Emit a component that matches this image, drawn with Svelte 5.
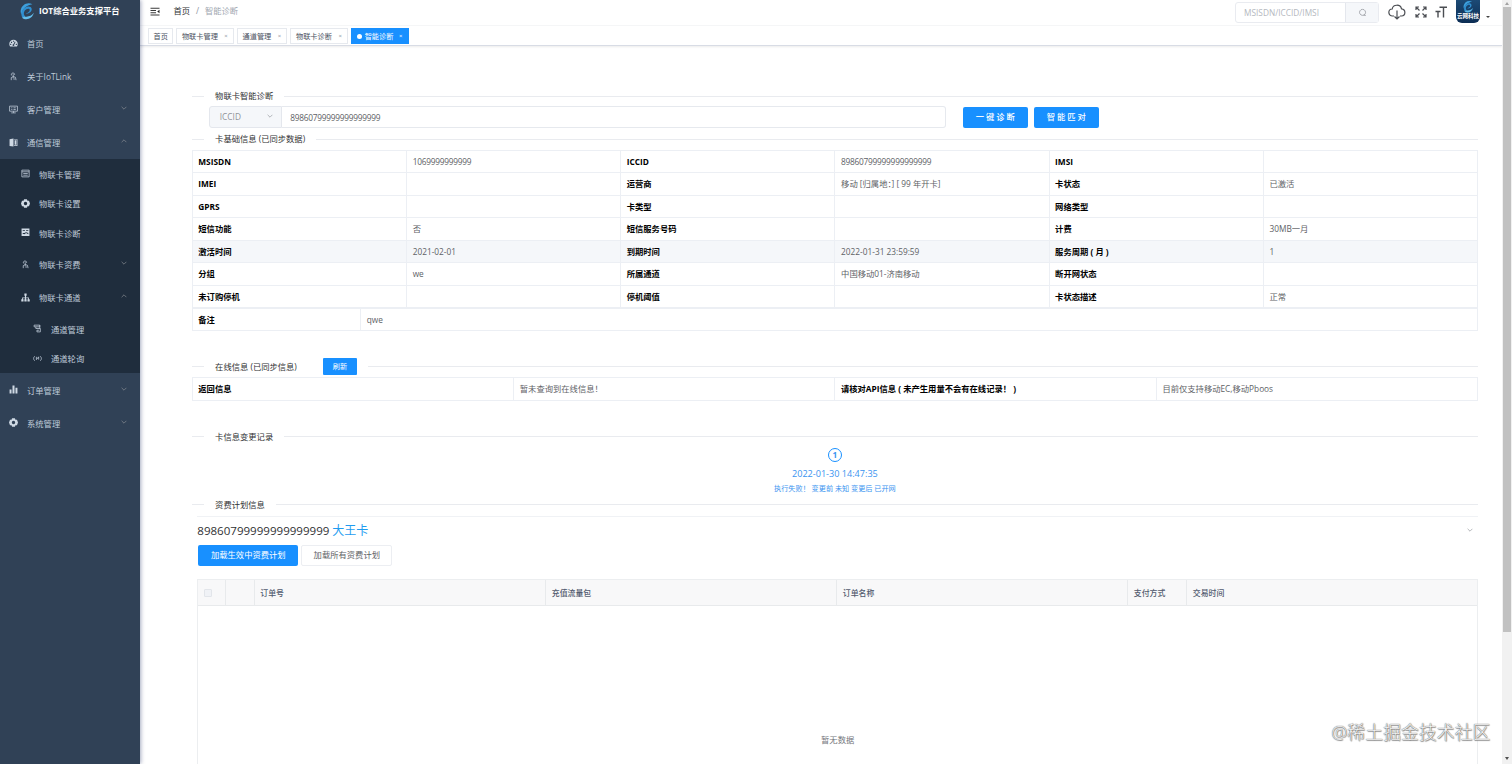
<script lang="ts">
  type Icon = { d: string; line?: boolean };
  type MenuItem = {
    label: string;
    icon: string;
    level: number;
    arrow?: 'up' | 'down';
    compact?: boolean;
  };

  const icons: Record<string, Icon> = {
    dashboard: {
      d: 'M8 1.500a7.500 7.500 0 0 0-7.500 7.500c0 1.600.5 3 1.300 4.200h12.400a7.500 7.500 0 0 0 1.300-4.200A7.500 7.500 0 0 0 8 1.500zM7 3h2v2H7zM2 8.500h2v2H2zM3.500 5h2v2h-2zM12 8.500h2v2h-2zM10.300 4.500l1.400.8-2.500 4.700a1.600 1.600 0 1 1-1.400-.8z',
    },
    people: {
      d: 'M4.500 6C2.500 1 10.500 0 10 5M7.500 4v7M7.500 8L4 10v4.500M7.500 8l4 1.500 1 5M9 11v3',
      line: true,
    },
    monitor: { d: 'M1 2h14v9H1zM4 14h8M8 11v3M4 5h2M4 8h2M8 5h4M8 8h4', line: true },
    book: { d: 'M1 2l7-1v14l-7-1zM9 2h6v12H9v-1.200h4.800V3.200H9zM10 4h3v8h-3z' },
    list: { d: 'M1.500 2h13v12h-13zM1.500 5h13M4 8h8M4 11h8', line: true },
    gear: {
      d: 'M5.500.5h5l1 2.500 2.700.3L16 8l-1.800 4.700-2.700.3-1 2.500h-5l-1-2.500-2.700-.3L0 8l1.800-4.700L4.500 3zM8 5a3 3 0 1 0 0 6 3 3 0 0 0 0-6z',
    },
    chart: { d: 'M1 1h14v13H1zM3 4v1.500h4V4zM9 4v1.500h4V4zM3 9v1l3 1 3-2 4 2V9L9 7.500 6 9z' },
    tree: { d: 'M6 1h4v4H9v3h5v3h1.500v4h-4v-4h1V9.500H9V11h1v4H6v-4h1V9.500H3.500V11h1v4h-4v-4H2V8h5V5H6z' },
    channel: { d: 'M2 2h10v3H2zM5 5v3h8v6H7v-3h4M12 2v6', line: true },
    signal: { d: 'M3 4c-2.500 2-2.500 6 0 8M13 4c2.500 2 2.500 6 0 8M6 5v5M10 5v5M6 10l4-5', line: true },
    bars: { d: 'M1 8h3.500v7H1zM6.200 1h3.600v14H6.200zM11.500 5H15v10h-3.500z' },
  };

  const menu: MenuItem[] = [
    { label: '首页', icon: 'dashboard', level: 0 },
    { label: '关于IoTLink', icon: 'people', level: 0 },
    { label: '客户管理', icon: 'monitor', level: 0, arrow: 'down' },
    { label: '通信管理', icon: 'book', level: 0, arrow: 'up' },
    { label: '物联卡管理', icon: 'list', level: 1, compact: true },
    { label: '物联卡设置', icon: 'gear', level: 1, compact: true },
    { label: '物联卡诊断', icon: 'chart', level: 1, compact: true },
    { label: '物联卡资费', icon: 'people', level: 1, arrow: 'down' },
    { label: '物联卡通道', icon: 'tree', level: 1, arrow: 'up' },
    { label: '通道管理', icon: 'channel', level: 2, compact: true },
    { label: '通道轮询', icon: 'signal', level: 2, compact: true },
    { label: '订单管理', icon: 'bars', level: 0, arrow: 'down' },
    { label: '系统管理', icon: 'gear', level: 0, arrow: 'down' },
  ];

  const tags = ['首页', '物联卡管理', '通道管理', '物联卡诊断', '智能诊断'];
  let activeTag = $state('智能诊断');

  const cardRows = [
    ['MSISDN', '1069999999999', 'ICCID', '89860799999999999999', 'IMSI', ''],
    ['IMEI', '', '运营商', '移动 [归属地：] [ 99 年开卡]', '卡状态', '已激活'],
    ['GPRS', '', '卡类型', '', '网络类型', ''],
    ['短信功能', '否', '短信服务号码', '', '计费', '30MB一月'],
    ['激活时间', '2021-02-01', '到期时间', '2022-01-31 23:59:59', '服务周期 ( 月 )', '1'],
    ['分组', 'we', '所属通道', '中国移动01-济南移动', '断开网状态', ''],
    ['未订购停机', '', '停机阈值', '', '卡状态描述', '正常'],
  ];
  let hoverRow = $state(4);

  let keyword = $state('');
  let iccid = $state('89860799999999999999');
</script>

{#snippet icon(name: string)}
  <svg class="icon" class:line={icons[name].line} viewBox="0 0 16 16">
    <path d={icons[name].d} fill-rule="evenodd" />
  </svg>
{/snippet}

{#snippet chevron(dir: string)}
  <svg class="chevron" class:up={dir === 'up'} viewBox="0 0 10 10">
    <path d="M1 3l4 4 4-4" />
  </svg>
{/snippet}

{#snippet swirl()}
  <path fill="#3d9fdc" d="M15.500 2.500C10-.5 3.500 3 2.500 9c-.3 2 0 3.500.8 5C4 8 8.500 3.500 15.500 2.500z" />
  <path fill="#2f8fd0" d="M4.200 17.500C1.500 12 5 5.500 10.500 5c4.500-.3 5.500 4 2.500 6.500-1.500 1.200-3.500 1.700-5 1.300 2.500-.6 4.700-2.300 4.500-4.200-.3-2-4-1.500-5.700 1.200-1.500 2.500-1 5 .7 6.200z" />
  <path fill="#63bdec" d="M4 17.500c4 3.500 11.500 1.500 13-5.500-2.500 3.500-6.500 5-10.500 4z" />
{/snippet}

<div class="app">
  <aside class="sidebar">
    <div class="logo">
      <svg viewBox="0 0 20 20">{@render swirl()}</svg>
      <h1>IOT综合业务支撑平台</h1>
    </div>
    <nav>
      {#each menu as item}
        <div class="menu-item level-{item.level}" class:compact={item.compact}>
          {@render icon(item.icon)}
          <span>{item.label}</span>
          {#if item.arrow}{@render chevron(item.arrow)}{/if}
        </div>
      {/each}
    </nav>
  </aside>

  <div class="main">
    <header class="navbar">
      <svg class="hamburger" viewBox="0 0 20 16">
        <path d="M1 1.500h18M1 6h11M1 10.500h11M1 15h18" />
        <path class="solid" d="M19 4.500v7L14.500 8z" />
      </svg>
      <div class="breadcrumb"><b>首页</b><i>/</i><span>智能诊断</span></div>
      <div class="search">
        <input bind:value={keyword} placeholder="MSISDN/ICCID/IMSI" />
        <button aria-label="搜索">
          <svg viewBox="0 0 12 12"><path d="M6 1.800a4 4 0 1 0 .1 0M7.500 9.800h3" /></svg>
        </button>
      </div>
      <svg class="nav-icon cloud" viewBox="0 0 18 16">
        <path d="M6 12H4.500a3.500 3.500 0 0 1-.3-7C5 0 12.500 0 13.500 4.800c4.500.5 4.500 7 0 7.200H12M9 6.500V15M6.500 12.500L9 15l2.500-2.500" />
      </svg>
      <svg class="nav-icon full" viewBox="0 0 12 12">
        <path d="M1 4V1h3M8 1h3v3M11 8v3H8M4 11H1V8M1 1l3.500 3.500M11 1L7.500 4.500M11 11L7.500 7.500M1 11l3.500-3.500" />
      </svg>
      <svg class="nav-icon size" viewBox="0 0 12 12">
        <path d="M4.500 1.200H12M8.500 1v10.500M.5 5.500h5M3 5.500v6" />
      </svg>
      <div class="avatar">
        <svg viewBox="0 0 20 20">{@render swirl()}</svg>
        <span>云网科技</span>
      </div>
      <span class="caret"></span>
    </header>

    <div class="tags">
      {#each tags as tag, i}
        <button class="tag" class:active={tag === activeTag} onclick={() => (activeTag = tag)}>
          {#if tag === activeTag}<span class="dot"></span>{/if}
          {tag}
          {#if i > 0}<span class="close">×</span>{/if}
        </button>
      {/each}
    </div>

    <main>
      <div class="divider first"><span>物联卡智能诊断</span></div>
      <div class="form">
        <div class="select">ICCID {@render chevron('down')}</div>
        <input class="digits" bind:value={iccid} />
        <button class="primary">一键诊断</button>
        <button class="primary">智能匹对</button>
      </div>

      <div class="divider"><span>卡基础信息 (已同步数据)</span></div>
      <div class="info">
        {#each cardRows as row, i}
          <!-- svelte-ignore a11y_no_static_element_interactions -->
          <div class="row" class:hover={i === hoverRow} onmouseenter={() => (hoverRow = i)}>
            {#each row as cell, c}
              <div class="cell" class:th={c % 2 === 0} class:digits={/^\d{13,}$/.test(cell)}>{cell}</div>
            {/each}
          </div>
        {/each}
      </div>
      <div class="info remark">
        <div class="row">
          <div class="cell th">备注</div>
          <div class="cell">qwe</div>
        </div>
      </div>

      <div class="divider online">
        <span>在线信息 (已同步信息) <button class="primary mini">刷新</button></span>
      </div>
      <div class="info">
        <div class="row">
          <div class="cell th">返回信息</div>
          <div class="cell">暂未查询到在线信息！</div>
          <div class="cell th">请核对API信息 ( 未产生用量不会有在线记录！ )</div>
          <div class="cell">目前仅支持移动EC,移动Pboos</div>
        </div>
      </div>

      <div class="divider changes"><span>卡信息变更记录</span></div>
      <div class="step">
        <div class="step-icon">1</div>
        <div class="step-title">2022-01-30 14:47:35</div>
        <div class="step-desc">执行失败！ 变更前 未知 变更后 已开网</div>
      </div>

      <div class="divider"><span>资费计划信息</span></div>
      <section class="plan">
        <div class="plan-title">
          <span>89860799999999999999</span>
          <em>大王卡</em>
          {@render chevron('down')}
        </div>
        <div class="plan-actions">
          <button class="primary">加载生效中资费计划</button>
          <button class="plain">加载所有资费计划</button>
        </div>
        <div class="orders">
          <div class="orders-head">
            <div><span class="checkbox"></span></div>
            <div></div>
            <div>订单号</div>
            <div>充值流量包</div>
            <div>订单名称</div>
            <div>支付方式</div>
            <div>交易时间</div>
          </div>
          <div class="empty">暂无数据</div>
        </div>
      </section>
    </main>
  </div>

  <div class="scrollbar">
    <span class="arrow up"></span>
    <span class="thumb"></span>
    <span class="arrow"></span>
  </div>
  <div class="watermark">@稀土掘金技术社区</div>
</div>

<style>
  :global(body) {
    margin: 0;
    overflow: hidden;
  }

  .app {
    position: relative;
    display: flex;
    width: 1512px;
    height: 764px;
    overflow: hidden;
    background: #fff;
    color: #606266;
    font-family: 'Open Sans', 'Noto Sans CJK SC', sans-serif;
    font-size: 8.3px;
    line-height: 12px;
  }

  .app * {
    box-sizing: border-box;
  }

  button,
  input {
    font: inherit;
    margin: 0;
    padding: 0;
    outline: none;
  }

  .sidebar {
    z-index: 1;
    flex: none;
    width: 139.5px;
    background: #304156;
    box-shadow: 1px 0 4px rgba(0, 21, 80, 0.35);
  }

  .logo {
    display: flex;
    align-items: center;
    height: 26.5px;
    padding: 0 0 4px 18px;
  }

  .logo svg {
    width: 19px;
    height: 18px;
    margin-right: 2px;
  }

  .logo h1 {
    margin: 0;
    color: #fff;
    font-size: 8.3px;
    font-weight: 700;
    white-space: nowrap;
  }

  .menu-item {
    display: flex;
    align-items: center;
    height: 33.1px;
    padding: 0 12.5px 0 9px;
    color: #bfcbd9;
  }

  .menu-item span {
    flex: 1;
    padding-top: 2px;
  }

  .menu-item.level-1,
  .menu-item.level-2 {
    background: #1f2d3d;
  }

  .menu-item.level-1 {
    padding-left: 21px;
  }

  .menu-item.level-2 {
    padding-left: 33px;
  }

  .menu-item.compact {
    height: 29.6px;
  }

  .icon {
    flex: none;
    width: 9px;
    height: 9px;
    margin-right: 9px;
    fill: #cfd9e4;
  }

  .icon.line {
    fill: none;
    stroke: #bfcbd9;
    stroke-width: 1.4;
  }

  .chevron {
    flex: none;
    width: 6px;
    height: 6px;
    margin-bottom: 2px;
    fill: none;
    stroke: #909399;
    stroke-width: 1.1;
  }

  .chevron.up {
    transform: rotate(180deg);
  }

  .main {
    flex: 1;
    min-width: 0;
    display: flex;
    flex-direction: column;
  }

  .navbar {
    flex: none;
    display: flex;
    align-items: flex-start;
    height: 26px;
    padding-left: 10px;
    border-bottom: 1px solid #f6f7f8;
  }

  .hamburger {
    width: 10px;
    height: 9px;
    margin: 7px 14px 0 0;
    fill: none;
    stroke: #222;
    stroke-width: 1.8;
  }

  .hamburger .solid {
    fill: #222;
    stroke: none;
  }

  .breadcrumb {
    flex: 1;
    margin-top: 5px;
  }

  .breadcrumb b {
    color: #303133;
    font-weight: 400;
  }

  .breadcrumb i {
    margin: 0 5.9px;
    color: #8d939d;
    font-style: normal;
  }

  .breadcrumb span {
    color: #a0a6b0;
  }

  .search {
    display: flex;
    width: 144px;
    height: 21px;
    margin-top: 2px;
    border: 1px solid #e9ebf0;
    border-radius: 3px;
  }

  .search input {
    width: 109px;
    padding-left: 8px;
    border: 0;
    background: none;
  }

  .search input::placeholder {
    color: #b4b8c0;
  }

  .search button {
    flex: 1;
    display: grid;
    place-items: center;
    border: 0;
    border-left: 1px solid #e4e7ed;
    background: #f5f7fa;
  }

  .search svg {
    width: 9px;
    height: 9px;
    fill: none;
    stroke: #909399;
  }

  .nav-icon {
    flex: none;
    fill: none;
    stroke: #4a4d52;
    stroke-width: 1.4;
  }

  .cloud {
    width: 18px;
    height: 16px;
    margin: 4px 0 0 9px;
    stroke-width: 1.2;
  }

  .full {
    width: 12px;
    height: 12px;
    margin: 6px 0 0 9px;
    stroke-width: 1.2;
  }

  .size {
    width: 12px;
    height: 12px;
    margin: 6px 0 0 8px;
  }

  .avatar {
    display: flex;
    flex-direction: column;
    align-items: center;
    width: 24px;
    height: 23px;
    margin-left: 9px;
    border-radius: 0 0 6px 6px;
    background: linear-gradient(#1c4a75, #0c2d54);
    color: #fff;
    font-size: 5.5px;
    font-weight: 700;
    line-height: 7px;
  }

  .avatar svg {
    width: 13px;
    height: 13px;
  }

  .caret {
    margin: 16px 12px 0 6px;
    border: 2px solid transparent;
    border-top-color: #444;
    border-bottom: 0;
  }

  .tags {
    flex: none;
    display: flex;
    gap: 3px;
    height: 20px;
    padding: 2px 0 0 8.5px;
    border-bottom: 1px solid #d8dce5;
    box-shadow: 0 1px 2px rgba(0, 0, 0, 0.08);
  }

  .tag {
    display: flex;
    align-items: center;
    height: 16px;
    padding: 0 4.5px;
    border: 1px solid #e6e9ee;
    background: #fff;
    color: #495060;
    font-size: 7.2px;
    white-space: nowrap;
  }

  .tag .close {
    width: 5px;
    margin-left: 5.700px;
    color: #8c919b;
    font-size: 6px;
    text-align: center;
  }

  .tag.active {
    border-color: #1890ff;
    background: #1890ff;
    color: #fff;
  }

  .tag.active .close {
    margin-left: 4.8px;
    color: #fff;
  }

  .tag .dot {
    width: 5px;
    height: 5px;
    margin-right: 3px;
    border-radius: 50%;
    background: #fff;
  }

  main {
    padding: 40px 24px 0 52.3px;
  }

  .divider {
    display: flex;
    align-items: center;
    height: 22px;
    color: #303133;
  }

  .divider::before,
  .divider::after {
    content: '';
    height: 1px;
    background: #e9ebef;
  }

  .divider::before {
    width: 12px;
  }

  .divider::after {
    flex: 1;
  }

  .divider span {
    padding: 0 11.3px;
    white-space: nowrap;
  }

  .divider.first {
    height: 20px;
  }

  .divider.online {
    margin-top: 24px;
  }

  .divider.changes {
    margin-top: 25px;
  }

  .form {
    display: flex;
    align-items: center;
    height: 22px;
    padding-left: 17px;
  }

  .select {
    display: flex;
    align-items: center;
    justify-content: space-between;
    width: 73px;
    height: 22px;
    padding: 0 8px 0 10px;
    border: 1px solid #e4e7ed;
    border-radius: 3px 0 0 3px;
    background: #f5f7fa;
    color: #909399;
  }

  .form input {
    width: 664px;
    height: 22px;
    margin-right: 17.5px;
    padding-left: 8.5px;
    border: 1px solid #e6e9ee;
    border-left: 0;
    border-radius: 0 3px 3px 0;
    color: #606266;
  }

  .digits {
    letter-spacing: -0.24px;
  }

  .primary {
    border: 0;
    border-radius: 2px;
    background: #1890ff;
    color: #fff;
  }

  .form .primary {
    width: 65px;
    height: 21px;
    margin-right: 6px;
    padding-left: 1px;
    font-weight: 500;
    letter-spacing: 2px;
  }

  .primary.mini {
    width: 34px;
    height: 17px;
    margin-left: 24px;
    border-radius: 1px;
    font-size: 7.15px;
  }

  .info {
    border: 1px solid #eceff4;
    border-width: 1px 0 0 1px;
  }

  .row {
    display: flex;
    height: 22.43px;
  }

  .row.hover {
    background: #f5f7fa;
  }

  .cell {
    flex: 1;
    padding: 5px 5.9px 0;
    border: 1px solid #eceff4;
    border-width: 0 1px 1px 0;
    white-space: nowrap;
  }

  .cell.th {
    padding-left: 5.500px;
    color: #000;
    font-weight: 700;
  }

  .info.remark .th {
    flex: none;
    width: 168px;
  }

  .step {
    display: flex;
    flex-direction: column;
    align-items: center;
    height: 46px;
    color: #3a94f0;
  }

  .step-icon {
    width: 14px;
    height: 14px;
    border: 1.5px solid #1890ff;
    border-radius: 50%;
    font-weight: 700;
    line-height: 12px;
    text-align: center;
  }

  .step-title {
    margin-top: 5px;
    font-size: 9.1px;
    line-height: 14px;
  }

  .step-desc {
    margin-top: 1px;
    font-size: 7.15px;
    line-height: 12px;
  }

  .plan {
    margin-left: 5.5px;
    border-top: 1px solid #f0f2f5;
  }

  .plan-title {
    display: flex;
    align-items: center;
    height: 28px;
    padding-right: 5px;
    color: #303133;
    font-size: 11.55px;
  }

  .plan-title em {
    flex: 1;
    margin-left: 3px;
    color: #1f9cf0;
    font-size: 12px;
    font-style: normal;
  }

  .plan-actions {
    display: flex;
    gap: 3px;
    padding-left: 1px;
  }

  .plan-actions button {
    width: 100px;
    height: 21px;
  }

  .plan-actions .plain {
    width: 91px;
    border: 1px solid #eceef2;
    border-radius: 2px;
    background: #fff;
    color: #606266;
  }

  .orders {
    height: 240px;
    margin-top: 13px;
    border: 1px solid #eceef0;
  }

  .orders-head {
    display: grid;
    grid-template-columns: 28px 28.5px 291.5px 291px 291px 59px 1fr;
    height: 26px;
    border-bottom: 1px solid #e8eaec;
    background: #f8f8f9;
    color: #515a6e;
    font-weight: 500;
  }

  .orders-head div {
    display: flex;
    align-items: center;
    padding: 2px 5.5px 0;
    border-right: 1px solid #e8eaec;
    font-size: 7.9px;
  }

  .orders-head div:last-child {
    border-right: 0;
  }

  .checkbox {
    width: 8px;
    height: 8px;
    border: 1px solid #e2e5ea;
    border-radius: 1px;
    background: #f0f2f6;
  }

  .empty {
    padding-top: 128px;
    color: #73767c;
    text-align: center;
  }

  .scrollbar {
    flex: none;
    display: flex;
    flex-direction: column;
    align-items: center;
    width: 10px;
    background: #f1f1f1;
  }

  .thumb {
    width: 8px;
    height: 625px;
    margin-bottom: auto;
    background: #c1c1c1;
  }

  .arrow {
    margin-bottom: 4px;
    border: 2px solid transparent;
    border-top: 3px solid #505050;
    border-bottom: 0;
  }

  .arrow.up {
    margin: 2px 0;
    border-top: 0;
    border-bottom: 3px solid #a3a3a3;
  }

  .watermark {
    position: absolute;
    right: 21.5px;
    bottom: 20px;
    color: #f4f4f4;
    font-size: 17.9px;
    font-weight: 300;
    line-height: 24px;
    text-shadow:
      0 0 1px #666,
      0 0 1px #777,
      0.5px 0.5px 1px #888;
  }
</style>
